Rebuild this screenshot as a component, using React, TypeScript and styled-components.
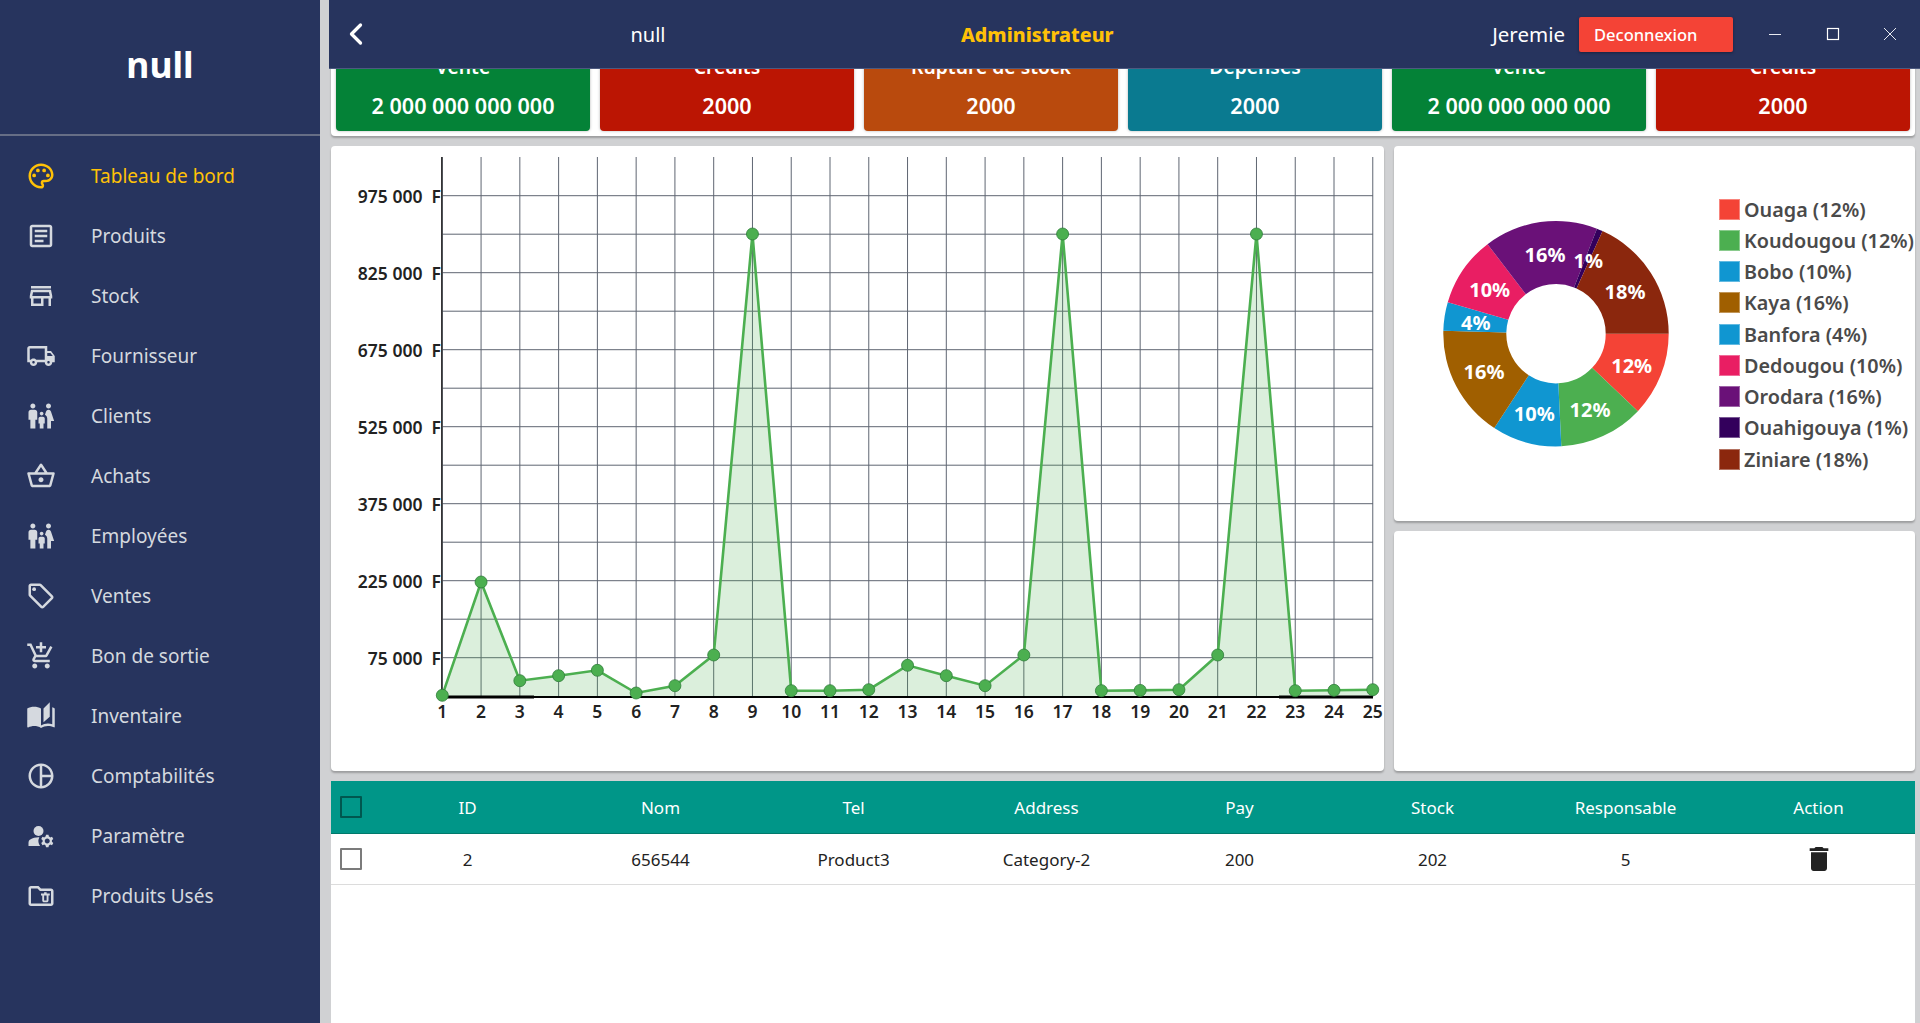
import styled, { createGlobalStyle } from 'styled-components'
import { ChevronLeft } from 'lucide-react'
import {
  MdOutlinePalette,
  MdOutlineArticle,
  MdOutlineStore,
  MdOutlineLocalShipping,
  MdFamilyRestroom,
  MdOutlineShoppingBasket,
  MdOutlineLocalOffer,
  MdOutlineAddShoppingCart,
  MdAutoStories,
  MdOutlinePieChart,
  MdManageAccounts,
  MdOutlineFolderDelete,
  MdDelete,
} from 'react-icons/md'

const FONT = '"Noto Sans", "Open Sans", Arial, sans-serif'

const GlobalStyle = createGlobalStyle`
  html, body {
    margin: 0;
    height: 100%;
    overflow: hidden;
    background: #d0d1d3;
    font-family: ${FONT};
  }
  * { box-sizing: border-box; }
`

const menu = [
  { label: 'Tableau de bord', icon: MdOutlinePalette, active: true },
  { label: 'Produits', icon: MdOutlineArticle },
  { label: 'Stock', icon: MdOutlineStore },
  { label: 'Fournisseur', icon: MdOutlineLocalShipping },
  { label: 'Clients', icon: MdFamilyRestroom },
  { label: 'Achats', icon: MdOutlineShoppingBasket },
  { label: 'Employées', icon: MdFamilyRestroom },
  { label: 'Ventes', icon: MdOutlineLocalOffer },
  { label: 'Bon de sortie', icon: MdOutlineAddShoppingCart },
  { label: 'Inventaire', icon: MdAutoStories },
  { label: 'Comptabilités', icon: MdOutlinePieChart },
  { label: 'Paramètre', icon: MdManageAccounts },
  { label: 'Produits Usés', icon: MdOutlineFolderDelete },
]

const cards = [
  { title: 'Vente', value: '2 000 000 000 000', color: '#048237' },
  { title: 'Credits', value: '2000', color: '#bb1503' },
  { title: 'Rupture de stock', value: '2000', color: '#b94a0d' },
  { title: 'Depenses', value: '2000', color: '#0a7a90' },
  { title: 'Vente', value: '2 000 000 000 000', color: '#048237' },
  { title: 'Credits', value: '2000', color: '#bb1503' },
]

// chart is drawn in page coordinates, the viewBox maps them on the panel
const X0 = 442.3
const XSTEP = 38.77
const YTOP = 195.7
const YSTEP = 38.5
const AXIS_Y = 697
const pointsY = [
  695.3, 582, 680.7, 675.7, 670.3, 693, 685.7, 655, 234, 690.7, 690.7, 689.7, 665.3,
  675.7, 685.7, 655, 234, 690.7, 690.4, 689.7, 655, 234, 690.7, 690.3, 689.7,
]
const yLabels = ['975 000', '825 000', '675 000', '525 000', '375 000', '225 000', '75 000']

const slices = [
  { name: 'Ouaga', pct: 12, color: '#f44336', end: 43.4, lx: 1631.7, ly: 365 },
  { name: 'Koudougou', pct: 12, color: '#4caf50', end: 87.3, lx: 1590, ly: 409 },
  { name: 'Bobo', pct: 10, color: '#1096d1', end: 123.2, lx: 1534.3, ly: 413 },
  { name: 'Kaya', pct: 16, color: '#a05f00', end: 181.5, lx: 1484, ly: 371.7 },
  { name: 'Banfora', pct: 4, color: '#1096d1', end: 196.2, lx: 1475.7, ly: 322.3 },
  { name: 'Dedougou', pct: 10, color: '#e91e63', end: 232.6, lx: 1489.7, ly: 289.3 },
  { name: 'Orodara', pct: 16, color: '#6a1178', end: 291.3, lx: 1545, ly: 254 },
  { name: 'Ouahigouya', pct: 1, color: '#33005c', end: 294.4, lx: 1588.3, ly: 260.3 },
  { name: 'Ziniare', pct: 18, color: '#8b270d', end: 360, lx: 1625, ly: 291 },
]

const CX = 1556
const CY = 333.7
const R_OUT = 112.7
const R_IN = 49.7

const polar = (r: number, deg: number) => {
  const a = (deg * Math.PI) / 180
  return `${(CX + r * Math.cos(a)).toFixed(2)} ${(CY + r * Math.sin(a)).toFixed(2)}`
}

const slicePath = (start: number, end: number) => {
  const large = end - start > 180 ? 1 : 0
  return `M${polar(R_OUT, start)} A${R_OUT} ${R_OUT} 0 ${large} 1 ${polar(R_OUT, end)} L${polar(R_IN, end)} A${R_IN} ${R_IN} 0 ${large} 0 ${polar(R_IN, start)} Z`
}

const columns = ['ID', 'Nom', 'Tel', 'Address', 'Pay', 'Stock', 'Responsable', 'Action']
const row = ['2', '656544', 'Product3', 'Category-2', '200', '202', '5']

const LineChart = () => {
  const xs = pointsY.map((_, i) => X0 + i * XSTEP)
  const line = pointsY.map((y, i) => `${xs[i].toFixed(2)},${y}`).join(' ')
  const area = `${X0},${AXIS_Y} ${line} ${xs[24].toFixed(2)},${AXIS_Y}`
  return (
    <ChartSvg viewBox="331 146 1053 625">
      {xs.map((x, i) => (
        <line key={i} x1={x} x2={x} y1={157} y2={AXIS_Y} stroke="#5f6672" strokeWidth={1} />
      ))}
      {Array.from({ length: 13 }, (_, i) => YTOP + i * YSTEP).map((y) => (
        <line key={y} x1={X0} x2={1373} y1={y} y2={y} stroke="#5f6672" strokeWidth={1} />
      ))}
      <polygon points={area} fill="#4caf50" fillOpacity={0.2} />
      <line x1={441.8} x2={441.8} y1={157} y2={AXIS_Y} stroke="#222" strokeWidth={1.4} />
      <line x1={441.8} x2={1373} y1={AXIS_Y} y2={AXIS_Y} stroke="#000" strokeWidth={2} />
      <line x1={441.8} x2={534} y1={AXIS_Y} y2={AXIS_Y} stroke="#000" strokeWidth={3} />
      <line x1={1279} x2={1373} y1={AXIS_Y} y2={AXIS_Y} stroke="#000" strokeWidth={3} />
      <polyline points={line} fill="none" stroke="#4caf50" strokeWidth={2.6} />
      {xs.map((x, i) => (
        <circle key={i} cx={x} cy={pointsY[i]} r={6} fill="#4caf50" stroke="#2f7d3a" strokeWidth={0.8} />
      ))}
      {yLabels.map((label, i) => (
        <AxisText key={label} x={441} y={YTOP + i * 2 * YSTEP} textAnchor="end" dominantBaseline="central">
          {label}{'\u00a0\u00a0'}F
        </AxisText>
      ))}
      {xs.map((x, i) => (
        <AxisText key={i} x={x} y={710.5} textAnchor="middle" dominantBaseline="central">
          {i + 1}
        </AxisText>
      ))}
    </ChartSvg>
  )
}

const Donut = () => (
  <DonutSvg viewBox="1394 146 325 375">
    {slices.map((s, i) => (
      <path key={s.name} d={slicePath(i === 0 ? 0 : slices[i - 1].end, s.end)} fill={s.color} />
    ))}
    {slices.map((s) => (
      <DonutText key={s.name} x={s.lx} y={s.ly} textAnchor="middle" dominantBaseline="central">
        {s.pct}%
      </DonutText>
    ))}
  </DonutSvg>
)

const App = () => (
  <>
    <GlobalStyle />
    <Page>
      <Sidebar>
        <Brand>null</Brand>
        <Menu>
          {menu.map(({ label, icon: Icon, active }) => (
            <MenuItem key={label} $active={active}>
              <IconSlot>
                <Icon size={30} />
              </IconSlot>
              {label}
            </MenuItem>
          ))}
        </Menu>
      </Sidebar>
      <Main>
        <TopBar>
          <BackSlot>
            <ChevronLeft size={36} strokeWidth={2.2} color="#fff" />
          </BackSlot>
          <CompanyName>null</CompanyName>
          <Role>Administrateur</Role>
          <UserName>Jeremie</UserName>
          <LogoutButton>Deconnexion</LogoutButton>
          <WindowButtons>
            <svg width="14" height="14" viewBox="0 0 14 14">
              <line x1="1" x2="13" y1="7.5" y2="7.5" stroke="#e8eaf0" strokeWidth="1" />
            </svg>
            <svg width="14" height="14" viewBox="0 0 14 14">
              <rect x="1.5" y="1.5" width="11" height="11" fill="none" stroke="#fff" strokeWidth="1.2" />
            </svg>
            <svg width="14" height="14" viewBox="0 0 14 14">
              <path d="M1 1 L13 13 M13 1 L1 13" stroke="#e8eaf0" strokeWidth="1" />
            </svg>
          </WindowButtons>
        </TopBar>
        <Content>
          <CardStrip>
            {cards.map((c, i) => (
              <StatCard key={i} $color={c.color}>
                <CardTitle>{c.title}</CardTitle>
                <CardValue>{c.value}</CardValue>
              </StatCard>
            ))}
          </CardStrip>
          <ChartsGrid>
            <ChartPanel>
              <LineChart />
            </ChartPanel>
            <PiePanel>
              <Donut />
              <Legend>
                {slices.map((s) => (
                  <LegendItem key={s.name}>
                    <Swatch $color={s.color} />
                    {s.name} ({s.pct}%)
                  </LegendItem>
                ))}
              </Legend>
            </PiePanel>
            <EmptyPanel />
          </ChartsGrid>
          <Table>
            <HeaderRow>
              <CheckCell>
                <HeaderCheck />
              </CheckCell>
              {columns.map((c) => (
                <Cell key={c}>{c}</Cell>
              ))}
            </HeaderRow>
            <BodyRow>
              <CheckCell>
                <RowCheck />
              </CheckCell>
              {row.map((v, i) => (
                <Cell key={i}>{v}</Cell>
              ))}
              <Cell>
                <MdDelete size={32} color="#222" />
              </Cell>
            </BodyRow>
          </Table>
        </Content>
      </Main>
    </Page>
  </>
)

const Page = styled.div`
  display: flex;
  width: 1920px;
  height: 1023px;
  overflow: hidden;
`

const Sidebar = styled.aside`
  flex: 0 0 320px;
  background: #27345e;
  display: flex;
  flex-direction: column;
`

const Brand = styled.div`
  height: 136px;
  border-bottom: 2px solid #666e86;
  color: #fff;
  font-size: 35.5px;
  font-weight: 700;
  line-height: 128px;
  text-align: center;
`

const Menu = styled.nav`
  padding-top: 10px;
  display: flex;
  flex-direction: column;
`

const MenuItem = styled.div<{ $active?: boolean }>`
  height: 60px;
  display: flex;
  align-items: center;
  padding-left: 26px;
  font-size: 19px;
  color: ${(p) => (p.$active ? '#ffc107' : '#d5d9df')};
`

const IconSlot = styled.span`
  width: 65px;
  display: flex;
  align-items: center;
`

const Main = styled.main`
  flex: 1;
  margin-left: 9px;
  min-width: 0;
  display: flex;
  flex-direction: column;
`

const TopBar = styled.header`
  position: relative;
  z-index: 2;
  flex: 0 0 69px;
  background: #27345e;
  border-bottom: 1px solid #4d5a80;
  display: flex;
  align-items: center;
  color: #fff;
`

const BackSlot = styled.div`
  width: 52px;
  padding-left: 9px;
  display: flex;
`

const CompanyName = styled.div`
  width: 210px;
  margin-left: 162px;
  text-align: center;
  font-size: 20px;
  font-weight: 400;
`

const Role = styled.div`
  margin-left: 208px;
  color: #ffc107;
  font-size: 19.6px;
  font-weight: 800;
`

const UserName = styled.div`
  margin-left: auto;
  font-size: 20.5px;
  font-weight: 400;
`

const LogoutButton = styled.button`
  margin-left: 14px;
  width: 154px;
  height: 35px;
  padding: 0 0 0 15px;
  border: none;
  border-radius: 2px;
  background: #f44336;
  box-shadow: 0 1px 3px rgba(0, 0, 0, 0.35);
  color: #fff;
  font-family: ${FONT};
  font-size: 16.5px;
  font-weight: 500;
  text-align: left;
`

const WindowButtons = styled.div`
  width: 187px;
  padding: 0 23px 0 35px;
  display: flex;
  justify-content: space-between;
  margin-top: -1px;
`

const Content = styled.div`
  flex: 1;
  min-height: 0;
  padding: 0 5px 0 2px;
  display: flex;
  flex-direction: column;
`

const CardStrip = styled.section`
  margin-top: -31px;
  padding: 0 5px 5px;
  background: #fff;
  border-radius: 0 0 4px 4px;
  box-shadow: 0 2px 2px rgba(0, 0, 0, 0.25);
  display: grid;
  grid-template-columns: repeat(6, 1fr);
  gap: 10px;
`

const StatCard = styled.div<{ $color: string }>`
  height: 93px;
  padding-top: 16px;
  border-radius: 4px;
  background: ${(p) => p.$color};
  box-shadow: 0 0 3px rgba(0, 0, 0, 0.3);
  color: #fff;
  font-weight: 600;
  text-align: center;
`

const CardTitle = styled.div`
  font-size: 19.3px;
  line-height: 26px;
`

const CardValue = styled.div`
  margin-top: 13px;
  font-size: 21.6px;
  line-height: 26px;
`

const ChartsGrid = styled.section`
  margin-top: 10px;
  display: grid;
  grid-template-columns: 1053px 1fr;
  grid-template-rows: 375px 240px;
  gap: 10px;
`

const Panel = styled.div`
  background: #fff;
  border-radius: 4px;
  box-shadow: 0 2px 2px rgba(0, 0, 0, 0.25);
`

const ChartPanel = styled(Panel)`
  grid-row: 1 / span 2;
`

const ChartSvg = styled.svg`
  display: block;
  width: 100%;
  height: 100%;
`

const AxisText = styled.text`
  font-family: ${FONT};
  font-size: 17.5px;
  font-weight: 600;
  fill: #222;
`

const PiePanel = styled(Panel)`
  display: flex;
  overflow: hidden;
`

const EmptyPanel = styled(Panel)``

const DonutSvg = styled.svg`
  flex: 0 0 325px;
  height: 100%;
`

const DonutText = styled.text`
  font-family: ${FONT};
  font-size: 20px;
  font-weight: 700;
  fill: #fff;
`

const Legend = styled.div`
  display: flex;
  flex-direction: column;
  justify-content: center;
  white-space: nowrap;
  padding-top: 1px;
`

const LegendItem = styled.div`
  height: 31.25px;
  display: flex;
  align-items: center;
  gap: 4px;
  color: #4a4a4a;
  font-size: 19.8px;
  font-weight: 600;
`

const Swatch = styled.span<{ $color: string }>`
  width: 21px;
  height: 21px;
  background: ${(p) => p.$color};
  border: 1px solid rgba(255, 255, 255, 0.35);
`

const Table = styled.section`
  flex: 1;
  margin-top: 10px;
  background: #fff;
`

const rowGrid = `
  display: grid;
  grid-template-columns: 40px repeat(8, 1fr);
  align-items: center;
  text-align: center;
`

const HeaderRow = styled.div`
  ${rowGrid}
  height: 53px;
  background: #009688;
  border-bottom: 1px solid #00796b;
  color: #fff;
  font-size: 17px;
  font-weight: 400;
`

const BodyRow = styled.div`
  ${rowGrid}
  height: 51px;
  border-bottom: 1px solid #dcdcdc;
  color: #222;
  font-size: 17px;
  font-weight: 400;
`

const Cell = styled.div`
  display: flex;
  justify-content: center;
  align-items: center;
`

const CheckCell = styled(Cell)``

const HeaderCheck = styled.span`
  width: 22px;
  height: 22px;
  border: 2.5px solid #00574f;
  border-radius: 1px;
`

const RowCheck = styled(HeaderCheck)`
  border-color: #7b7b7b;
`

export default App
